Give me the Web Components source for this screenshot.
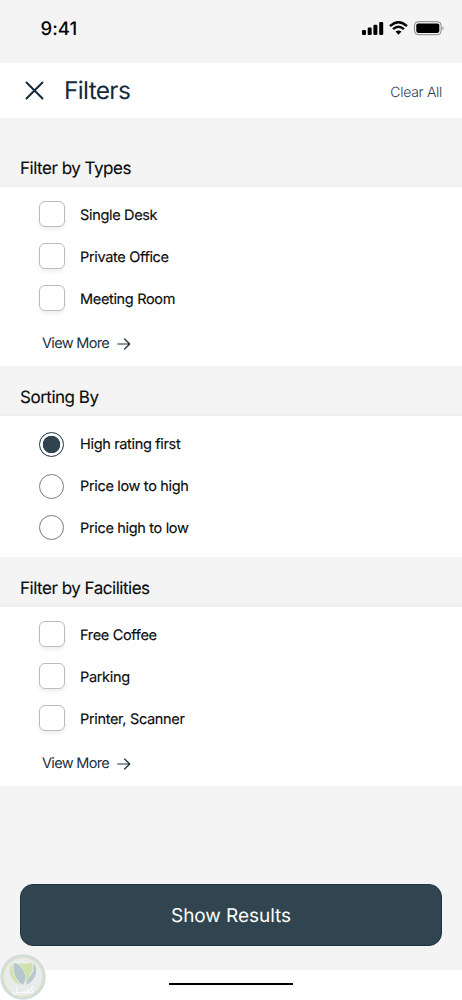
<!DOCTYPE html>
<html lang="en"><head><meta charset="utf-8"><title>Filters</title>
<style>html,body{margin:0;background:#f4f4f4}body{width:462px;height:1000px;overflow:hidden;font-family:Inter,"Liberation Sans",sans-serif;text-rendering:geometricPrecision}</style>
</head><body><filters-screen></filters-screen>
<script>
const define=(name,html)=>customElements.define(name,class extends HTMLElement{
  constructor(){super();const t=document.createElement('template');t.innerHTML=html;this.attachShadow({mode:'open'}).append(t.content.cloneNode(true));}
});
define('status-bar',`<style>:host{display:flex;height:63px;box-sizing:border-box;padding:18px 17.5px 0 40.5px;justify-content:space-between;color:#050505}
time{font-size:18.5px;line-height:21px;margin-top:1px;font-weight:550;letter-spacing:.05px}svg{display:block;margin-top:1px}</style>
<time>9:41</time><svg width="83" height="18" viewBox="0 0 83 18">
<g><rect x="0" y="11" width="4" height="5" rx="1.1"/><rect x="5.7" y="8.6" width="4" height="7.4" rx="1.1"/><rect x="11.4" y="5.8" width="4" height="10.2" rx="1.1"/><rect x="17.2" y="3" width="4" height="13" rx="1.1"/></g>
<g fill="none" stroke="#050505" stroke-width="2.4"><path d="M28 7.2Q36.5 -.8 45 7.2"/><path d="M31 10.2Q36.5 5.2 42 10.2"/></g><path d="M33.5 12.6Q36.5 10.2 39.5 12.6L36.5 15.8Z"/>
<rect x="52.5" y="2.7" width="26.6" height="13" rx="3.6" fill="none" stroke="#858585"/><rect x="54.3" y="4.5" width="23" height="9.4" rx="1.8"/><path d="M80.5 7.2Q82.8 9.2 80.5 11.3Z" fill="#8c8c8c"/></svg>`);
define('title-bar',`<style>:host{display:flex;height:55px;box-sizing:border-box;padding:0 20px 0 25px;background:#fff;align-items:center;color:#142b3b}
svg{display:block;margin-top:-1px}h1{font-size:24.5px;font-weight:440;line-height:30px;margin:-1px auto 0 20px;letter-spacing:-.68px}button{all:unset;font-size:14px;font-weight:300;line-height:18px;color:#2b4056;margin-top:5px;letter-spacing:-.3px}</style>
<svg width="19" height="19" viewBox="0 0 19 19"><path d="M1.5 1.5L17.5 17.5M17.5 1.5L1.5 17.5" fill="none" stroke="#142b3b" stroke-width="2" stroke-linecap="round"/></svg><h1>Filters</h1><button>Clear All</button>`);
define('filter-section',`<style>:host{display:block}h2{box-sizing:border-box;height:var(--head,50px);margin:0;padding:0 20px 7px;display:flex;align-items:flex-end;font-size:17px;font-weight:400;line-height:22px;letter-spacing:-.48px;color:#0c0c0c;-webkit-text-stroke:.12px;background:linear-gradient(#f4f4f4 calc(100% - 4px),#eee)}
section{height:var(--body,179px);box-sizing:border-box;padding:14px 0 0 39px;background:#fff}</style>
<h2><slot name="title"></slot></h2><section><slot></slot></section>`);
define('check-option',`<style>:host{display:flex;height:42px;align-items:flex-start;color:#0c0c0c}
i{box-sizing:border-box;width:26px;height:26px;border:1px solid #b9bcc2;border-radius:6px;background:#fff;box-shadow:0 3px 4px #00000010}
span{font-size:14.5px;line-height:20px;margin:5px 0 0 15px;letter-spacing:-.33px;-webkit-text-stroke:.15px}</style><i></i><span><slot></slot></span>`);
define('radio-option',`<style>:host{display:flex;height:42px;align-items:flex-start;color:#0c0c0c}
i{box-sizing:border-box;width:25px;height:25px;margin:2px 0 0 0;border:1px solid #777b84;border-radius:50%}
:host(:last-of-type) i{margin-top:1px}
:host([checked]) i{border:1.3px solid #1c3040;background:radial-gradient(circle,#2f444f 8.4px,#fff 9.1px)}
span{font-size:14.5px;line-height:20px;margin:5px 0 0 16px;letter-spacing:-.33px;-webkit-text-stroke:.15px}</style><i></i><span><slot></slot></span>`);
define('view-more',`<style>:host{display:flex;align-items:center;margin:7px 0 0 3px;height:20px;color:#1b303f;font-size:14.5px;line-height:20px}span{width:67px;white-space:nowrap;letter-spacing:-.68px}svg{margin:0 0 0 8px}</style>
<span>View More</span><svg width="14" height="12" viewBox="0 0 14 12"><path d="M.8 6H12.7M7.6 1L12.7 6L7.6 11" fill="none" stroke="#1b303f" stroke-width="1.2" stroke-linecap="round" stroke-linejoin="round"/></svg>`);
define('show-results',`<style>:host{display:block;padding:98px 20px 24px}button{all:unset;display:block;box-sizing:border-box;width:422px;height:62px;border:1px solid #1c3443;border-radius:13px;background:#30454f;color:#fff;text-align:center;font-size:19px;line-height:62px;letter-spacing:-.05px}</style><button><slot></slot></button>`);
define('home-area',`<style>:host{display:flex;height:30px;background:#fff;justify-content:center}i{width:124px;height:2px;margin-top:13px;background:#000}</style><i></i>`);
define('brand-seal',`<style>:host{position:absolute;left:0;top:954px;display:block}svg{display:block}</style>
<svg width="47" height="46" viewBox="0 0 47 46"><circle cx="23" cy="23" r="21.5" fill="#e9eceb" stroke="#d0dbdf" stroke-width="2.4"/><circle cx="23" cy="23" r="19.8" fill="none" stroke="#d9e5c1" stroke-width="1.6"/>
<path d="M13 9.5Q8 14 10 20Q12 28 21 31Q11 21 13 9.5Z" fill="#d3e2ae"/><path d="M14 9Q19 9 23 16Q28 24 23 31Q12 24 14 9Z" fill="#b5c7cc"/><path d="M19 9Q27 11 31 8.5Q35 15 30 21Q27 25 26 30Q28 20 19 9Z" fill="#cfe0aa"/><path d="M33 9Q38 13 35.5 21Q33 28 26 31Q27 25 31 21Q35 16 33 9Z" fill="#b7cacc"/>
<text x="23" y="38.5" text-anchor="middle" font-family="DejaVu Sans,sans-serif" font-size="8.5" fill="#fff">كفيــل</text></svg>`);
define('filters-screen',`<style>:host{display:block;width:462px;height:1000px;position:relative;background:#f4f4f4}.types{--head:69px}.sort{--body:141px}</style>
<status-bar></status-bar><title-bar></title-bar>
<filter-section class="types"><span slot="title">Filter by Types</span><check-option>Single Desk</check-option><check-option>Private Office</check-option><check-option>Meeting Room</check-option><view-more></view-more></filter-section>
<filter-section class="sort"><span slot="title">Sorting By</span><radio-option checked>High rating first</radio-option><radio-option>Price low to high</radio-option><radio-option>Price high to low</radio-option></filter-section>
<filter-section><span slot="title">Filter by Facilities</span><check-option>Free Coffee</check-option><check-option>Parking</check-option><check-option>Printer, Scanner</check-option><view-more></view-more></filter-section>
<show-results>Show Results</show-results><home-area></home-area><brand-seal></brand-seal>`);
</script></body></html>
